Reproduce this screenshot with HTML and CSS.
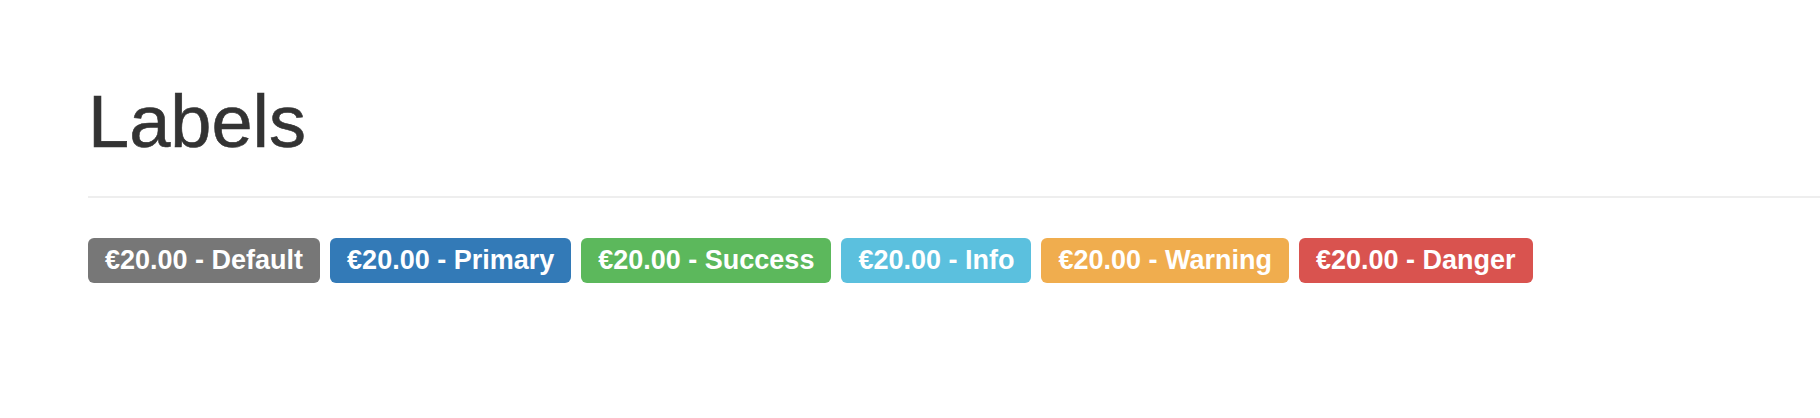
FILE: index.html
```html
<!DOCTYPE html>
<html lang="en">
<head>
<meta charset="utf-8">
<title>Labels</title>
<link rel="stylesheet" href="styles.css">
</head>
<body>
<main class="page">
  <header class="page-header">
    <h1 class="title">Labels</h1>
  </header>
  <div class="labels">
    <span class="label label-default">€20.00 - Default</span>
    <span class="label label-primary">€20.00 - Primary</span>
    <span class="label label-success">€20.00 - Success</span>
    <span class="label label-info">€20.00 - Info</span>
    <span class="label label-warning">€20.00 - Warning</span>
    <span class="label label-danger">€20.00 - Danger</span>
  </div>
</main>
</body>
</html>
```
FILE: styles.css
```css
html, body {
  margin: 0;
  padding: 0;
  background: #fff;
}
body {
  font-family: "Liberation Sans", Arial, Helvetica, sans-serif;
  color: #333;
}
.page {
  padding: 81px 0 0 88px;
}
.page-header {
  padding-bottom: 34px;
  border-bottom: 2px solid #eee;
}
.title {
  margin: 0;
  font-size: 74px;
  line-height: 1.1;
  font-weight: 500;
  color: #333;
  -webkit-text-stroke: 0.6px #333;
}
.labels {
  display: flex;
  gap: 10px;
  margin-top: 40px;
}
.label {
  display: inline-block;
  font-size: 27px;
  font-weight: bold;
  line-height: 1;
  padding: 9px 17px;
  border-radius: 6px;
  color: #fff;
  white-space: nowrap;
}
.label-default { background: #777; }
.label-primary { background: #337ab7; }
.label-success { background: #5cb85c; }
.label-info { background: #5bc0de; }
.label-warning { background: #f0ad4e; }
.label-danger { background: #d9534f; }
```
